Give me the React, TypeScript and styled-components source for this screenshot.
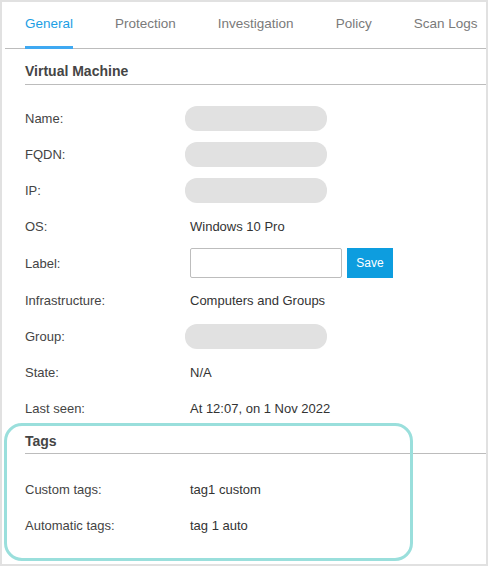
import React from 'react'
import styled, { createGlobalStyle } from 'styled-components'

const GlobalStyle = createGlobalStyle`
  html, body {
    margin: 0;
    padding: 0;
    background: #ffffff;
  }
  body {
    font-family: 'Liberation Sans', Arial, sans-serif;
  }
`

const Frame = styled.div`
  position: relative;
  width: 488px;
  height: 566px;
  box-sizing: border-box;
  border: 2px solid #e1e1e1;
  background: #ffffff;
  overflow: hidden;
`

const TabBar = styled.div`
  display: flex;
  gap: 42px;
  margin-left: 3px;
  padding-left: 20px;
  border-bottom: 1px solid #bcbcbc;
`

const Tab = styled.div<{ active?: boolean }>`
  padding: 13px 0 14px;
  line-height: 17px;
  font-size: 13.5px;
  color: ${(p) => (p.active ? '#1c9ee4' : '#7a7a7a')};
  border-bottom: 3px solid ${(p) => (p.active ? '#3fa9f2' : 'transparent')};
  margin-bottom: -1px;
  white-space: nowrap;
`

const Content = styled.div`
  padding: 5px 0 0 23px;
`

const SectionTitle = styled.div<{ tight?: boolean }>`
  padding: ${(p) => (p.tight ? '7px 0 4px' : '9px 0 5px')};
  line-height: 16px;
  font-size: 14px;
  font-weight: bold;
  color: #454545;
  border-bottom: 1px solid #bcbcbc;
  margin-bottom: ${(p) => (p.tight ? 17 : 15)}px;
`

const Row = styled.div<{ tall?: boolean }>`
  display: flex;
  align-items: center;
  height: ${(p) => (p.tall ? 38 : 36)}px;
  font-size: 13px;
`

const Label = styled.div`
  width: 165px;
  color: #444444;
`

const Value = styled.div`
  color: #333333;
`

const Blurred = styled.div`
  width: 142px;
  height: 25px;
  border-radius: 12px;
  background: #e1e1e1;
  margin-left: -5px;
`

const LabelInput = styled.input`
  width: 152px;
  height: 30px;
  box-sizing: border-box;
  border: 1px solid #bdbdbd;
  border-radius: 2px;
  padding: 0 6px;
  font-size: 13px;
  font-family: inherit;
  outline: none;
`

const SaveButton = styled.button`
  margin-left: 5px;
  width: 46px;
  height: 30px;
  border: none;
  background: #0d9ddf;
  color: #ffffff;
  font-size: 12px;
  font-family: 'Liberation Sans', Arial, sans-serif;
  padding: 0;
`

const Highlight = styled.div`
  position: absolute;
  left: 2px;
  top: 421px;
  width: 409px;
  height: 138px;
  box-sizing: border-box;
  border: 3px solid #9adfdc;
  border-radius: 18px;
  pointer-events: none;
`

const tabs = ['General', 'Protection', 'Investigation', 'Policy', 'Scan Logs']

export default function App() {
  return (
    <>
      <GlobalStyle />
      <Frame>
        <TabBar>
          {tabs.map((t, i) => (
            <Tab key={t} active={i === 0}>
              {t}
            </Tab>
          ))}
        </TabBar>
        <Content>
          <SectionTitle>Virtual Machine</SectionTitle>
          <Row>
            <Label>Name:</Label>
            <Blurred />
          </Row>
          <Row>
            <Label>FQDN:</Label>
            <Blurred />
          </Row>
          <Row>
            <Label>IP:</Label>
            <Blurred />
          </Row>
          <Row>
            <Label>OS:</Label>
            <Value>Windows 10 Pro</Value>
          </Row>
          <Row tall>
            <Label>Label:</Label>
            <LabelInput />
            <SaveButton>Save</SaveButton>
          </Row>
          <Row>
            <Label>Infrastructure:</Label>
            <Value>Computers and Groups</Value>
          </Row>
          <Row>
            <Label>Group:</Label>
            <Blurred />
          </Row>
          <Row>
            <Label>State:</Label>
            <Value>N/A</Value>
          </Row>
          <Row>
            <Label>Last seen:</Label>
            <Value>At 12:07, on 1 Nov 2022</Value>
          </Row>
          <SectionTitle tight>Tags</SectionTitle>
          <Row>
            <Label>Custom tags:</Label>
            <Value>tag1 custom</Value>
          </Row>
          <Row>
            <Label>Automatic tags:</Label>
            <Value>tag 1 auto</Value>
          </Row>
        </Content>
        <Highlight />
      </Frame>
    </>
  )
}
